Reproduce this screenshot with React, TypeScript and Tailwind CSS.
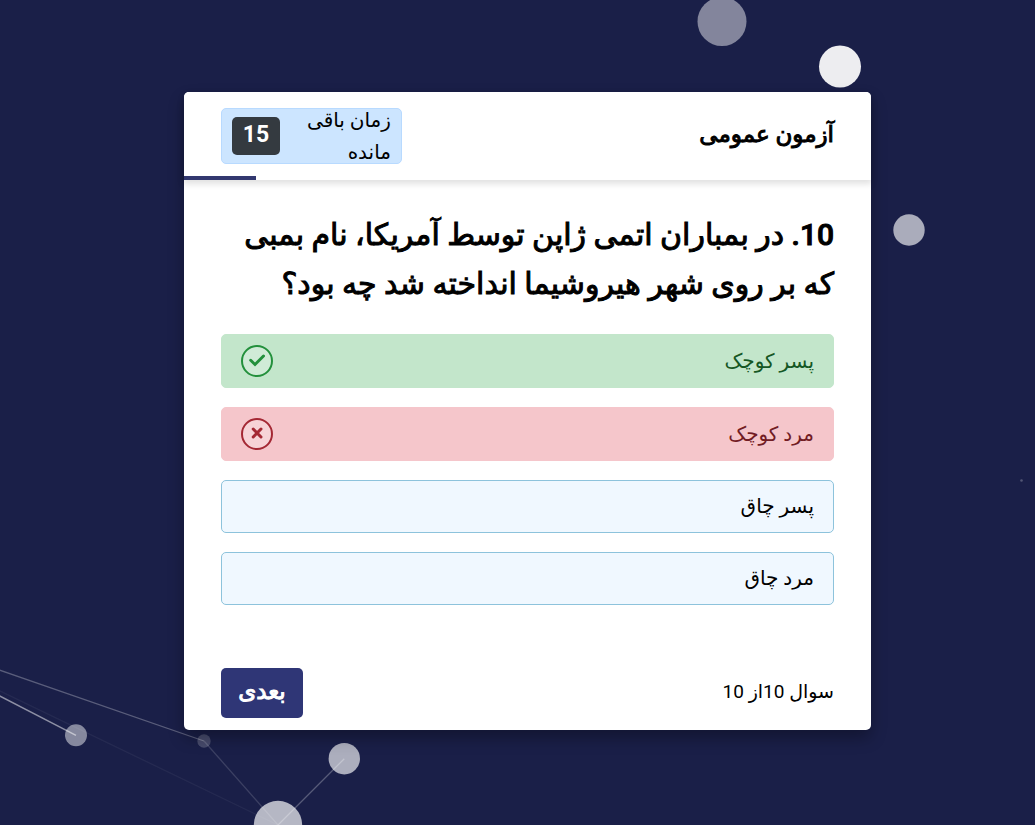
type Status = "idle" | "correct" | "wrong";

const options: { text: string; status: Status }[] = [
  { text: "پسر کوچک", status: "correct" },
  { text: "مرد کوچک", status: "wrong" },
  { text: "پسر چاق", status: "idle" },
  { text: "مرد چاق", status: "idle" },
];

const optionStyles: Record<Status, string> = {
  correct: "h-[54px] border-[#c3e6cb] bg-[#c3e6cb] text-[#155724]",
  wrong: "h-[54px] border-[#f5c6cb] bg-[#f5c6cb] text-[#721c24]",
  idle: "h-[53px] border-[#8dc3dc] bg-[#f0f8ff] text-black",
};

function Particles() {
  return (
    <svg className="absolute inset-0 h-full w-full" aria-hidden="true">
      <g fill="#fff">
        <circle cx="722" cy="21.5" r="24.5" opacity="0.46" />
        <circle cx="840" cy="66.5" r="21" opacity="0.92" />
        <circle cx="909" cy="230" r="15.7" opacity="0.63" />
        <circle cx="76" cy="735.3" r="11" opacity="0.47" />
        <circle cx="204" cy="741" r="6.7" opacity="0.2" />
        <circle cx="344.3" cy="758.7" r="15.7" opacity="0.64" />
        <circle cx="278" cy="825" r="24.2" opacity="0.68" />
        <circle cx="1021.5" cy="480.5" r="1.3" opacity="0.25" />
      </g>
      <g stroke="#fff" fill="none">
        <path d="M-2 669.5 204 741" strokeOpacity="0.28" strokeWidth="1.3" />
        <path d="M-2 695 76 735.3" strokeOpacity="0.5" strokeWidth="1.5" />
        <path d="M204 741 278 825" strokeOpacity="0.15" strokeWidth="1.3" />
        <path d="M344.3 758.7 278 825" strokeOpacity="0.27" strokeWidth="1.3" />
        <path d="M-2 690 278 825" strokeOpacity="0.05" strokeWidth="1.3" />
      </g>
    </svg>
  );
}

function StatusIcon({ status }: { status: Status }) {
  if (status === "correct") {
    return (
      <svg className="h-8 w-8" viewBox="0 0 32 32" fill="none" aria-label="درست">
        <circle cx="16" cy="16" r="15" fill="#d0ebd7" stroke="#23903c" strokeWidth="2" />
        <path d="M9.7 15.3 14 19.5 22.5 11" stroke="#23903c" strokeWidth="3" strokeLinecap="round" />
      </svg>
    );
  }
  return (
    <svg className="h-8 w-8" viewBox="0 0 32 32" fill="none" aria-label="نادرست">
      <circle cx="16" cy="16" r="15" fill="#f7d3d7" stroke="#a42834" strokeWidth="2" />
      <path d="m12.2 11 7.8 8M20 11l-7.8 8" stroke="#a42834" strokeWidth="3" strokeLinecap="round" />
    </svg>
  );
}

export default function App() {
  return (
    <div
      dir="rtl"
      lang="fa"
      className="relative flex min-h-screen items-center justify-center overflow-hidden bg-[#1a1f48] pb-1 pl-5 font-[Roboto,'DejaVu_Sans',sans-serif] text-black"
    >
      <Particles />
      <main className="relative w-full max-w-[687px] rounded-[5px] bg-white shadow-[0_8px_16px_rgba(0,0,0,0.3)]">
        <header className="relative flex h-[88px] items-center justify-between rounded-t-[5px] bg-white px-[37px] shadow-[0_3px_6px_1px_rgba(0,0,0,0.12)]">
          <h1 className="text-[23px] font-medium [-webkit-text-stroke:1px_currentColor]">آزمون عمومی</h1>
          <div className="flex h-14 w-[181px] items-center justify-between rounded-[5px] border border-[#b8daff] bg-[#cce5ff] px-2.5">
            <span className="w-[90px] text-xl leading-8">زمان باقی مانده</span>
            <span className="flex h-[38px] w-12 items-center justify-center rounded-[5px] bg-[#343a40] text-[23px] font-bold text-white">
              15
            </span>
          </div>
          <div className="absolute bottom-0 left-0 h-1 w-[72px] bg-[#32386f]" />
        </header>

        <section className="px-[37px] pt-[30px] pb-[51px]">
          <h2 className="text-[30px] leading-[49px] font-medium [-webkit-text-stroke:1px_currentColor]">
            10. در بمباران اتمی ژاپن توسط آمریکا، نام بمبی که بر روی شهر هیروشیما انداخته شد چه بود؟
          </h2>
          <div className="mt-[26px] flex flex-col gap-[19px]">
            {options.map((option) => (
              <button
                key={option.text}
                type="button"
                className={`flex items-center justify-between rounded-[5px] border px-[19px] text-xl ${optionStyles[option.status]}`}
              >
                <span>{option.text}</span>
                {option.status !== "idle" && <StatusIcon status={option.status} />}
              </button>
            ))}
          </div>
        </section>

        <footer className="flex items-center justify-between px-[37px] pt-3 pb-3">
          <p className="text-[19px]">سوال 10از 10</p>
          <button
            type="button"
            className="h-[50px] w-[82px] rounded-[5px] bg-[#2f3676] text-[23px] font-medium text-white [-webkit-text-stroke:1px_currentColor]"
          >
            بعدی
          </button>
        </footer>
      </main>
    </div>
  );
}
